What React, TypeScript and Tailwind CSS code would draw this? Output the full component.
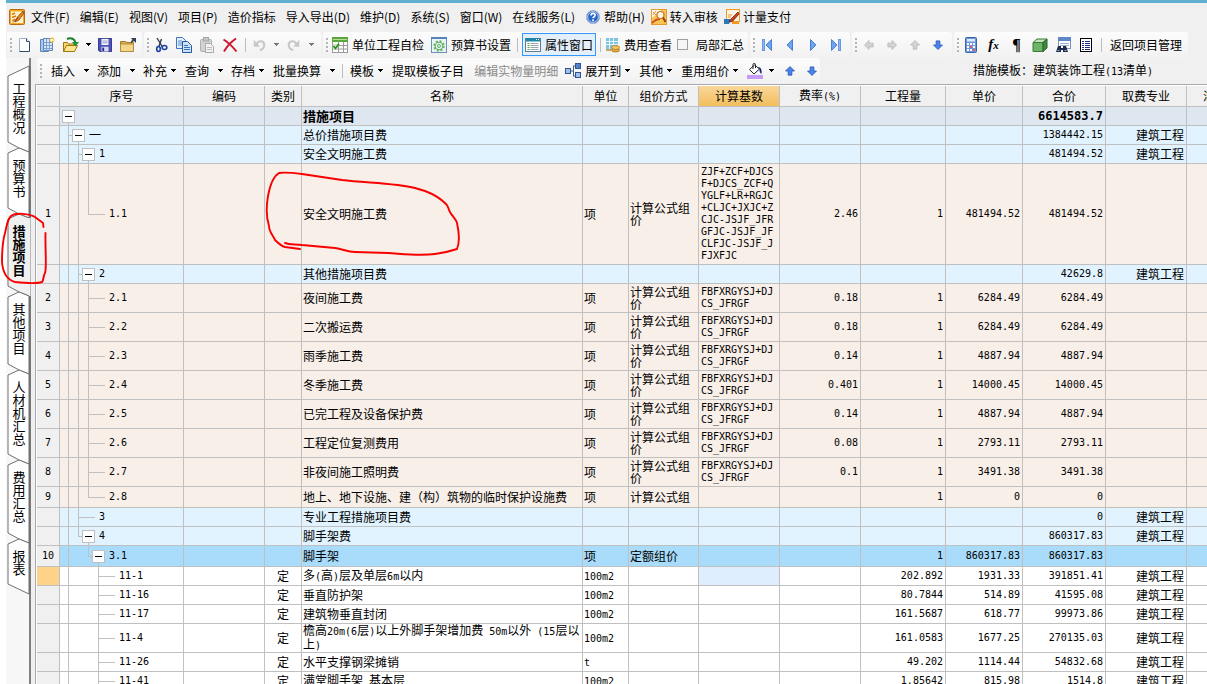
import { Fragment, type ReactNode } from "react"
import clsx from "clsx"

const MONO = "font-['DejaVu_Sans_Mono',monospace]"
const SANS = "font-['Noto_Sans_CJK_SC',sans-serif]"

/* ---------- data ---------- */

const COLUMNS = [
  { key: "no", label: "", col: "w-[23px]" },
  { key: "seq", label: "序号", col: "w-[124px]" },
  { key: "code", label: "编码", col: "w-[81px]" },
  { key: "kind", label: "类别", col: "w-[37px]" },
  { key: "name", label: "名称", col: "" },
  { key: "unit", label: "单位", col: "w-[46px]" },
  { key: "method", label: "组价方式", col: "w-[70px]" },
  { key: "base", label: "计算基数", col: "w-[81px]" },
  { key: "rate", label: "费率(%)", col: "w-[81px]" },
  { key: "qty", label: "工程量", col: "w-[85px]" },
  { key: "price", label: "单价", col: "w-[77px]" },
  { key: "total", label: "合价", col: "w-[83px]" },
  { key: "major", label: "取费专业", col: "w-[81px]" },
  { key: "summary", label: "汇总类别", col: "w-[81px]" },
]

type Tone = "root" | "group" | "item" | "picked" | "plain"

interface Row {
  tone: Tone
  h: number
  seq: string
  name: string
  // tree connectors: levels with a full line, the elbow level, and the toggle level
  full: number[]
  elbow?: number
  last?: boolean
  toggle?: number
  no?: string
  kind?: string
  unit?: string
  method?: string
  base?: string
  rate?: string
  qty?: string
  price?: string
  total?: string
  major?: string
  active?: boolean
}

const JZ = "建筑工程"
const GS = "计算公式组价"
const FB = "FBFXRGYSJ+DJCS_JFRGF"
const LONG_BASE =
  "ZJF+ZCF+DJCSF+DJCS_ZCF+QYGLF+LR+RGJC+CLJC+JXJC+ZCJC-JSJF_JFRGFJC-JSJF_JFCLFJC-JSJF_JFJXFJC"

const item = (no: string, seq: string, name: string, rate: string, price: string): Row => ({
  tone: "item", h: 29, no, seq, name, full: [0, 1], elbow: 2,
  unit: "项", method: GS, base: FB, rate, qty: "1", price, total: price,
})

const quota = (seq: string, name: string, unit: string, qty: string, price: string, total: string, h = 19): Row => ({
  tone: "plain", h, seq, name, full: [0], elbow: 3, kind: "定", unit, qty, price, total, major: JZ,
})

const ROWS: Row[] = [
  { tone: "root", h: 19, seq: "", name: "措施项目", full: [], toggle: 0, total: "6614583.7" },
  { tone: "group", h: 19, seq: "一", name: "总价措施项目费", full: [], elbow: 0, toggle: 1, total: "1384442.15", major: JZ },
  { tone: "group", h: 19, seq: "1", name: "安全文明施工费", full: [0], elbow: 1, toggle: 2, total: "481494.52", major: JZ },
  {
    tone: "item", h: 101, no: "1", seq: "1.1", name: "安全文明施工费", full: [0, 1], elbow: 2, last: true,
    unit: "项", method: GS, base: LONG_BASE, rate: "2.46", qty: "1", price: "481494.52", total: "481494.52",
  },
  { tone: "group", h: 19, seq: "2", name: "其他措施项目费", full: [0], elbow: 1, toggle: 2, total: "42629.8", major: JZ },
  item("2", "2.1", "夜间施工费", "0.18", "6284.49"),
  item("3", "2.2", "二次搬运费", "0.18", "6284.49"),
  item("4", "2.3", "雨季施工费", "0.14", "4887.94"),
  item("5", "2.4", "冬季施工费", "0.401", "14000.45"),
  item("6", "2.5", "已完工程及设备保护费", "0.14", "4887.94"),
  item("7", "2.6", "工程定位复测费用", "0.08", "2793.11"),
  item("8", "2.7", "非夜间施工照明费", "0.1", "3491.38"),
  {
    tone: "item", h: 21, no: "9", seq: "2.8", name: "地上、地下设施、建（构）筑物的临时保护设施费", full: [0, 1], elbow: 2,
    last: true, unit: "项", method: GS, qty: "1", price: "0", total: "0",
  },
  { tone: "group", h: 19, seq: "3", name: "专业工程措施项目费", full: [0], elbow: 1, total: "0", major: JZ },
  { tone: "group", h: 19, seq: "4", name: "脚手架费", full: [0], elbow: 1, last: true, toggle: 2, total: "860317.83", major: JZ },
  {
    tone: "picked", h: 21, no: "10", seq: "3.1", name: "脚手架", full: [0], elbow: 2, last: true, toggle: 3,
    unit: "项", method: "定额组价", qty: "1", price: "860317.83", total: "860317.83",
  },
  { ...quota("11-1", "多(高)层及单层6m以内", "100m2", "202.892", "1931.33", "391851.41"), active: true },
  quota("11-16", "垂直防护架", "100m2", "80.7844", "514.89", "41595.08"),
  quota("11-17", "建筑物垂直封闭", "100m2", "161.5687", "618.77", "99973.86"),
  quota("11-4", "檐高20m(6层)以上外脚手架增加费 50m以外 (15层以上)", "100m2", "161.0583", "1677.25", "270135.03", 29),
  quota("11-26", "水平支撑钢梁摊销", "t", "49.202", "1114.44", "54832.68"),
  quota("11-41", "满堂脚手架 基本层", "100m2", "1.85642", "815.98", "1514.8"),
]

const TONES: Record<Tone, string> = {
  root: "bg-[#dee6f0]",
  group: "bg-[#e1f3ff]",
  item: "bg-[#f8efe9]",
  picked: "bg-[#a9dcfb]",
  plain: "bg-white",
}

const TABS = [
  { label: "工程概况", h: 77 },
  { label: "预算书", h: 66 },
  { label: "措施项目", h: 78 },
  { label: "其他项目", h: 78 },
  { label: "人材机汇总", h: 90 },
  { label: "费用汇总", h: 79 },
  { label: "报表", h: 51 },
]

/* ---------- small pieces ---------- */

// latin runs use the narrow fixed pitch face, half the width of a chinese glyph
function Mixed({ text }: { text: string }) {
  return (
    <>
      {text.split(/([\x20-\x7e]+)/).map((part, i) =>
        i % 2 ? (
          <span key={i} className={clsx(MONO, "text-[10px]")}>{part}</span>
        ) : (
          <Fragment key={i}>{part}</Fragment>
        ),
      )}
    </>
  )
}

function Icon({ children, size = 16 }: { children: ReactNode; size?: number }) {
  return (
    <svg width={size} height={size} viewBox="0 0 16 16" fill="none" className="shrink-0" aria-hidden="true">
      {children}
    </svg>
  )
}

function Caret({ className = "", color = "#000" }: { className?: string; color?: string }) {
  return (
    <svg width="7" height="4" viewBox="0 0 7 4" className={clsx("shrink-0", className)} aria-hidden="true">
      <path d="M1 0h5v1H5v1H4v1H3V2H2V1H1z" fill={color} />
    </svg>
  )
}

function Sep() {
  return <span className="mx-1 h-[14px] w-px shrink-0 bg-[#bdbdbd]" />
}

function Group({ children, className = "" }: { children: ReactNode; className?: string }) {
  return (
    <div
      className={clsx(
        "flex h-[26px] shrink-0 items-center rounded-[3px] bg-linear-to-b from-[#fcfcfc] to-[#f1f1f1]",
        className,
      )}
    >
      <span className="ml-[3px] flex shrink-0 flex-col gap-[2px]">
        {[0, 1, 2, 3].map((n) => (
          <i key={n} className="h-[2px] w-[2px] bg-[#b4b4b4]" />
        ))}
      </span>
      {children}
    </div>
  )
}

function Tool({ label, children, className = "w-[23px]" }: { label: string; children: ReactNode; className?: string }) {
  return (
    <button type="button" aria-label={label} className={clsx("flex h-6 shrink-0 items-center justify-center", className)}>
      {children}
    </button>
  )
}

function Drop({ label, near = false, icon }: { label: string; near?: boolean; icon?: ReactNode }) {
  return (
    <button type="button" className="flex shrink-0 items-center whitespace-nowrap">
      {icon}
      {label}
      <Caret className={near ? "mr-2 ml-[3px]" : "mr-[7px] ml-2"} />
    </button>
  )
}

/* ---------- icons ---------- */

const AppIcon = () => (
  <Icon>
    <rect x="0.5" y="0.5" width="15" height="15" rx="1" fill="#f6a821" stroke="#b86a10" />
    <path d="M2 2.500h12V14H2z" fill="#fff3d0" />
    <path d="M3 5.500 6 4M3 8.500l4-1.500M3 12l3-2" stroke="#d77a12" strokeWidth="1.500" />
    <path d="M14 2 8.500 8l-2.500 5 4-2 5-7z" fill="#f08a1c" stroke="#7d3a08" strokeWidth="0.800" />
    <path d="m4 13.500 5-5" stroke="#7d3a08" />
  </Icon>
)

const HelpIcon = () => (
  <Icon>
    <circle cx="8" cy="8" r="6.600" fill="#2b66c9" stroke="#9fb6da" />
    <circle cx="8" cy="8" r="5.400" stroke="#dfe9f8" strokeWidth="0.800" />
    <path d="M6 6.500c0-3 4.300-2.600 4.100-.3C10 7.700 8.200 7.600 8.100 9.300" stroke="#fff" strokeWidth="1.700" />
    <rect x="7.200" y="10.500" width="1.800" height="1.600" fill="#fff" />
  </Icon>
)

const AuditIcon = () => (
  <Icon>
    <rect x="0.5" y="0.5" width="15" height="15" fill="#fbc452" stroke="#e39b2c" />
    <path d="M1 1h9L1 9z" fill="#fffaf0" />
    <path d="m2 3 3 3M5 2l-3 4" stroke="#e8902c" />
    <path d="M1 14c3-3 5-4 8-4" stroke="#d0521c" strokeWidth="1.800" />
    <circle cx="9.500" cy="6" r="3.500" fill="#fdf3dd" stroke="#c07c30" strokeWidth="1.200" />
    <path d="m12 8.500 2.500 4.500" stroke="#8d4313" strokeWidth="2" />
  </Icon>
)

const PayIcon = () => (
  <Icon>
    <rect x="2.500" y="0.500" width="13" height="12" fill="#fff7e6" stroke="#f09a24" />
    <path d="M0 10h7l-2 5H0z" fill="#2d79b8" />
    <path d="M4 6h4M4 8h3" stroke="#e7912c" />
    <path d="m14 3-7 7-2 3 4-1 6-7z" fill="#ce3d1c" stroke="#5b2010" strokeWidth="0.700" />
    <path d="M8 14h7" stroke="#f09a24" strokeWidth="2" />
  </Icon>
)

const NewIcon = () => (
  <Icon>
    <path d="M3.500 1.500h7l3 3v10h-10z" fill="#fff" stroke="#9fb2cc" />
    <path d="M10.500 1.500v3h3" fill="#dce7f5" stroke="#36506f" />
    <path d="M13.500 5v9.500h-10" stroke="#304a68" />
  </Icon>
)

const NewGridIcon = () => (
  <Icon>
    <path d="M1.500 2.500h8v12h-8z" fill="#a9c8ee" stroke="#5d83b8" />
    <path d="M4.500 1.500h9v12h-9z" fill="#d7e7fa" stroke="#5d83b8" />
    <path d="M7.500 2v12M10.500 2v12M5 5.500h8M5 8.500h8M5 11.500h8" stroke="#7fa0cd" />
    <path d="M13 0v6M10 3h6M11 1l4 4M15 1l-4 4" stroke="#f3bd35" />
    <circle cx="13" cy="3" r="1.400" fill="#fff6b0" />
  </Icon>
)

const OpenIcon = () => (
  <Icon>
    <path d="M.5 14.500v-9h4l1 1.500h6v3" fill="#f8d568" stroke="#a07518" />
    <path d="m.5 14.500 3-6h11l-3 6z" fill="#ffe88c" stroke="#a07518" />
    <path d="M4 2c4-2 8 0 8.500 4" stroke="#1d7d2c" strokeWidth="2" />
    <path d="M9 5h7l-3.500 4.500z" fill="#1f9234" />
  </Icon>
)

const SaveIcon = () => (
  <Icon size={14}>
    <path d="M.5.500h15v15H2l-1.500-1.500z" fill="#4c52b8" stroke="#232a80" />
    <rect x="4" y="1" width="8" height="7" fill="#f2f3fb" />
    <path d="M5 3.500h6M5 5.500h6" stroke="#8f94cc" />
    <rect x="4" y="10" width="8" height="5.500" fill="#d9dbef" />
    <rect x="5" y="11" width="2" height="4" fill="#232a80" />
  </Icon>
)

const FolderIcon = () => (
  <Icon>
    <path d="M.5 4.500h5l1.500 1h6.500v9H.5z" fill="#d8ac56" stroke="#a57b2a" />
    <path d="M.5 7h13v7.500H.5z" fill="#f4d58b" stroke="#b68d3a" />
    <path d="M11 1h5v5l-2-2-3 2V4l1.500-1z" fill="#333f55" />
  </Icon>
)

const CutIcon = () => (
  <Icon>
    <path d="M4 1l5.500 9M8.500 2 6 9" stroke="#303a50" strokeWidth="1.400" />
    <ellipse cx="5.500" cy="12" rx="1.800" ry="2.500" stroke="#17409f" strokeWidth="1.600" />
    <ellipse cx="11.500" cy="10.500" rx="2.300" ry="2" stroke="#17409f" strokeWidth="1.600" />
  </Icon>
)

const CopyIcon = () => (
  <Icon>
    <path d="M.5.500h6l3 3v8h-9z" fill="#e3effc" stroke="#3f74b8" />
    <path d="M2 4h4M2 6h4M2 8h4" stroke="#5b8ecb" />
    <path d="M6.500 4.500h5l4 4v7h-9z" fill="#cfe2f9" stroke="#2158a3" />
    <path d="M8 8.500h4M8 10.500h6M8 12.500h6" stroke="#3a73bc" />
  </Icon>
)

const PasteIcon = () => (
  <Icon>
    <rect x="1.500" y="2.500" width="11" height="12" rx="1" fill="#d2d2d2" stroke="#b0b0b0" />
    <rect x="4.500" y=".5" width="5" height="3.500" fill="#c6c6c6" stroke="#a5a5a5" />
    <path d="M6.500 6.500h5l3 3v6h-8z" fill="#f3f3f3" stroke="#a9a9a9" />
    <path d="M8 10.500h5M8 12.500h5" stroke="#bcbcbc" />
  </Icon>
)

const DeleteIcon = () => (
  <Icon>
    <path d="M1.500 2.500c5 3 9 7 13 12M14 1.500C9 5 5 9 2 14.500" stroke="#cf1630" strokeWidth="2" />
  </Icon>
)

const UndoIcon = ({ flip = false }: { flip?: boolean }) => (
  <Icon size={14}>
    <g transform={flip ? "translate(16 0) scale(-1 1)" : undefined}>
      <path d="M5 7c3-5 9-4 9 1 0 3-2 5-5 6" stroke="#c8c8c8" strokeWidth="2.500" />
      <path d="M2 2v8h7z" fill="#c8c8c8" />
    </g>
  </Icon>
)

const CheckTableIcon = () => (
  <Icon>
    <rect x=".5" y=".5" width="15" height="15" fill="#fff" stroke="#9a9a9a" />
    <rect width="16" height="5" fill="#5aa83c" />
    <path d="M1 2.500h14" stroke="#b4e09b" />
    <path d="M1 8.500h15M1 12h15M6.500 5v11M11.500 5v11" stroke="#9a9a9a" />
    <rect x="1" y="7" width="5" height="5" fill="#c9eab9" />
    <path d="m1.500 9 2 2.500L7 6.500" stroke="#2f8a1b" strokeWidth="1.600" />
  </Icon>
)

const GearIcon = () => (
  <Icon>
    <rect x=".5" y=".5" width="15" height="15" fill="#eaf3f8" stroke="#6b8fb5" />
    <path d="M0 1h16" stroke="#5784b8" strokeWidth="2" />
    <circle cx="8" cy="9" r="4.800" stroke="#5fb257" strokeWidth="1.800" strokeDasharray="2 1.770" />
    <circle cx="8" cy="9" r="3.800" stroke="#5fb257" />
    <circle cx="8" cy="9" r="1.500" stroke="#5fb257" />
  </Icon>
)

const PanelIcon = () => (
  <Icon>
    <rect x=".5" y="1.500" width="15" height="13" fill="#fff" stroke="#5f7d92" />
    <rect x="1" y="1" width="14" height="3.500" fill="#1f85a6" />
    <path d="M11 2.500h1M13 2.500h1" stroke="#fff" />
    <path d="M2.500 6.500h2M2.500 8.500h2M2.500 10.500h2M2.500 12.500h2" stroke="#50a145" />
    <path d="M5.500 6.500h8M5.500 8.500h8M5.500 10.500h8M5.500 12.500h8" stroke="#9aa4ab" />
  </Icon>
)

const CostIcon = () => (
  <Icon>
    <rect x="1" y="1" width="12" height="11" fill="#7cc4de" />
    <path d="M1 4.500h12M1 7.500h12M4.500 1v11M8.500 1v11" stroke="#e9f7fc" />
    <ellipse cx="10.500" cy="13" rx="4" ry="2" fill="#e6ac3d" stroke="#a8741d" strokeWidth=".8" />
    <ellipse cx="10.500" cy="10.500" rx="4" ry="2" fill="#f3c65c" stroke="#a8741d" strokeWidth=".8" />
    <path d="M1 13h6" stroke="#c7a465" strokeWidth="2" />
  </Icon>
)

const NavIcon = ({ bar = false, flip = false }: { bar?: boolean; flip?: boolean }) => (
  <Icon>
    <g transform={flip ? "translate(16 0) scale(-1 1)" : undefined}>
      {bar && <rect x="3.500" y="2.500" width="2" height="11" fill="#8db8f4" stroke="#6b97de" />}
      <path d={bar ? "M12.500 2.500v11L7 8z" : "M10.500 2.500v11L5 8z"} fill="#6ea3f0" stroke="#4a7fd6" />
    </g>
  </Icon>
)

const ArrowIcon = ({ turn, blue = false }: { turn: number; blue?: boolean }) => (
  <Icon size={12}>
    <path
      d="M8 2l6 6h-3.500v5.500h-5V8H2z"
      transform={`rotate(${turn} 8 8)`}
      fill={blue ? "#4a84ea" : "#d3d3d3"}
      stroke={blue ? "#2450ad" : "#b3b3b3"}
    />
  </Icon>
)

const CalcIcon = () => (
  <Icon>
    <rect x="2.500" y=".5" width="11" height="15" rx="1" fill="#6f97d8" stroke="#3d64a6" />
    <rect x="4" y="2" width="8" height="2.500" fill="#dbeafd" />
    <path d="M4 7h8M4 10h8M4 13h8" stroke="#fff" strokeWidth="2" strokeDasharray="2 1" />
    <path d="M7 10h2M10 13h2" stroke="#e0605e" strokeWidth="2" />
  </Icon>
)

const CubeIcon = () => (
  <Icon>
    <path d="M1 5.500 5 2h10l-4 3.500z" fill="#bde3b6" stroke="#3c7a3b" />
    <path d="M1 5.500h10v9H1z" fill="#6db566" stroke="#3c7a3b" />
    <path d="M11 5.500 15 2v9l-4 3.500z" fill="#3d8a3c" stroke="#2a622b" />
  </Icon>
)

const FindIcon = () => (
  <Icon>
    <rect x="3.500" y=".5" width="12" height="11" fill="#fff" stroke="#7b93bd" />
    <rect x="3" y="0" width="13" height="4" fill="#5d86cd" />
    <path d="M5 6.500h9M5 8.500h9" stroke="#9db2d5" />
    <path d="M3 9h3v2h2V9h3l2 6H8v-2H6v2H1z" fill="#1f2c48" />
    <path d="M2.500 13.500h2M9.500 13.500h2" stroke="#86a9e0" />
  </Icon>
)

const ListIcon = () => (
  <Icon>
    <rect x="2.500" y="1.500" width="11" height="13" fill="#fff" stroke="#000" />
    <path
      d="M4 4.500h2M4 6.500h2M4 8.500h2M4 10.500h2M4 12.500h2M7 4.500h5M7 6.500h5M7 8.500h5M7 10.500h5M7 12.500h5"
      stroke="#1d2b86"
    />
  </Icon>
)

const TreeIcon = () => (
  <Icon>
    <path d="M5 8h4M8.500 3v10M8 3h3M8 13h3" stroke="#45618d" />
    <rect x=".5" y="5.500" width="5" height="5" fill="#9fc0ee" stroke="#31548f" />
    <rect x="10.500" y=".5" width="5" height="5" fill="#4f82cf" stroke="#31548f" />
    <rect x="10.500" y="9.500" width="5" height="5" fill="#9fc0ee" stroke="#31548f" />
  </Icon>
)

const BucketIcon = () => (
  <Icon>
    <path d="m2.500 6.500 5-4.500 5 4-5.500 5z" fill="#fff" stroke="#222" />
    <path d="M6 6V1.500C6 0 8.500 0 8.500 1.500V5" stroke="#222" />
    <path d="M11 4c3 0 4 3 3.500 7-1.500-1-2-2-2-5z" fill="#151d7b" />
    <rect y="12" width="16" height="4" fill="#c79bf5" />
  </Icon>
)

/* ---------- bars ---------- */

function MenuBar() {
  return (
    <nav className="flex h-[28px] items-center gap-[10px] overflow-hidden pl-[3px] whitespace-nowrap">
      <div className="flex items-center gap-[6px]">
        <AppIcon />
        <button type="button">文件(F)</button>
      </div>
      {["编辑(E)", "视图(V)", "项目(P)", "造价指标", "导入导出(D)", "维护(D)", "系统(S)", "窗口(W)", "在线服务(L)"].map((m) => (
        <button type="button" key={m}>{m}</button>
      ))}
      <div className="flex items-center gap-[6px]">
        <button type="button" className="flex items-center gap-[3px]"><HelpIcon />帮助(H)</button>
        <button type="button" className="flex items-center gap-[3px]"><AuditIcon />转入审核</button>
        <button type="button" className="flex items-center gap-[3px]"><PayIcon />计量支付</button>
      </div>
    </nav>
  )
}

function MainToolbar() {
  return (
    <div className="flex h-[27px] items-center gap-[2px] overflow-hidden pl-px whitespace-nowrap">
      <Group className="w-[135px]">
        <Tool label="新建"><NewIcon /></Tool>
        <Tool label="新建工程"><NewGridIcon /></Tool>
        <Tool label="打开" className="w-[25px]"><OpenIcon /></Tool>
        <Tool label="最近打开" className="w-[10px]"><Caret /></Tool>
        <Tool label="保存"><SaveIcon /></Tool>
        <Tool label="目录"><FolderIcon /></Tool>
      </Group>
      <Group className="w-[177px]">
        <Tool label="剪切"><CutIcon /></Tool>
        <Tool label="复制"><CopyIcon /></Tool>
        <Tool label="粘贴"><PasteIcon /></Tool>
        <Tool label="删除"><DeleteIcon /></Tool>
        <Sep />
        <Tool label="撤销" className="w-[18px]"><UndoIcon /></Tool>
        <Tool label="撤销列表" className="w-[17px]"><Caret color="#777" /></Tool>
        <Tool label="恢复" className="w-[18px]"><UndoIcon flip /></Tool>
        <Tool label="恢复列表" className="w-[17px]"><Caret color="#777" /></Tool>
      </Group>
      <Group className="w-[425px]">
        <button type="button" className="ml-1 flex items-center gap-1"><CheckTableIcon />单位工程自检</button>
        <button type="button" className="mr-[2px] ml-[7px] flex items-center gap-1"><GearIcon />预算书设置</button>
        <Sep />
        <button type="button" className="flex h-[23px] items-center gap-1 border border-[#3399ff] bg-[#e3effb] px-[2px]">
          <PanelIcon />属性窗口
        </button>
        <Sep />
        <button type="button" className="flex items-center gap-[3px]"><CostIcon />费用查看</button>
        <label className="ml-[5px] flex items-center gap-2">
          <input type="checkbox" className="h-[11px] w-[11px] appearance-none border border-[#a0a0a0] bg-[#f6f6f6]" />
          局部汇总
        </label>
      </Group>
      <Group className="w-[100px]">
        <Tool label="首条"><NavIcon bar /></Tool>
        <Tool label="上一条"><NavIcon /></Tool>
        <Tool label="下一条"><NavIcon flip /></Tool>
        <Tool label="末条"><NavIcon bar flip /></Tool>
      </Group>
      <Group className="w-[100px]">
        <Tool label="升级"><ArrowIcon turn={-90} /></Tool>
        <Tool label="降级"><ArrowIcon turn={90} /></Tool>
        <Tool label="上移"><ArrowIcon turn={0} /></Tool>
        <Tool label="下移"><ArrowIcon turn={180} blue /></Tool>
      </Group>
      <Group className="w-[234px]">
        <Tool label="计算器"><CalcIcon /></Tool>
        <Tool label="公式">
          <span className="font-['Liberation_Serif',serif] text-[15px] leading-4 font-bold italic">
            f<span className="text-[11px]">x</span>
          </span>
        </Tool>
        <Tool label="特殊符号">
          <span className="font-['Liberation_Serif',serif] text-[16px] leading-4 font-bold">¶</span>
        </Tool>
        <Tool label="图元"><CubeIcon /></Tool>
        <Tool label="查找"><FindIcon /></Tool>
        <Tool label="列表"><ListIcon /></Tool>
        <Sep />
        <button type="button" className="ml-1">返回项目管理</button>
      </Group>
    </div>
  )
}

function EditToolbar() {
  return (
    <div className="flex h-[26px] items-center overflow-hidden pl-[2px] whitespace-nowrap">
      <Group className="w-[783px]">
        <span className="w-[9px] shrink-0" />
        <Drop label="插入" />
        <Drop label="添加" />
        <Drop label="补充" near />
        <Drop label="查询" />
        <Drop label="存档" near />
        <Drop label="批量换算" />
        <span className="mr-[7px] -ml-px h-[14px] w-px shrink-0 bg-[#bdbdbd]" />
        <Drop label="模板" near />
        <button type="button" className="mr-[10px]">提取模板子目</button>
        <button type="button" disabled className="mr-[7px] text-[#8a8a8a]">编辑实物量明细</button>
        <Drop label="展开到" near icon={<span className="mr-1"><TreeIcon /></span>} />
        <Drop label="其他" near />
        <Drop label="重用组价" near />
        <Tool label="填充颜色" className="w-4"><BucketIcon /></Tool>
        <Tool label="选择颜色" className="w-4"><Caret /></Tool>
        <Tool label="上移" className="w-[22px]"><ArrowIcon turn={0} blue /></Tool>
        <Tool label="下移" className="w-[22px]"><ArrowIcon turn={180} blue /></Tool>
      </Group>
      <span className="mr-[54px] ml-auto"><Mixed text="措施模板：建筑装饰工程(13清单)" /></span>
    </div>
  )
}

/* ---------- side tabs ---------- */

function SideTab({ label, h, first, current, end }: { label: string; h: number; first: boolean; current: boolean; end: boolean }) {
  const top = first ? "0,0 21,-10" : "0,0 11,-5 21,-1"
  const bottom = end ? `21,${h - 1} 0,${h - 11}` : `21,${h - 1} 11,${h - 5} 0,${h - 11}`
  return (
    <button type="button" className="grid w-[22px]" style={{ height: h }} aria-current={current ? "page" : undefined}>
      <svg width="22" height={h} className="overflow-visible [grid-area:1/1]" aria-hidden="true">
        <polygon points={`${top} ${bottom}`} fill={current ? "#f0f0f0" : "#fff"} />
        <polyline points={top} fill="none" stroke="#707070" />
        <polyline points={`${bottom} 0,0`} fill="none" stroke="#707070" />
        <path d={`M21.500 ${first ? -10 : -1}V${h - 1}`} stroke={current ? "#f0f0f0" : "#707070"} strokeWidth="2" />
      </svg>
      <span
        className={clsx(
          "mx-auto w-[13px] pt-[5px] text-[13px] leading-[13px] [grid-area:1/1]",
          current && "font-bold",
        )}
      >
        {label}
      </span>
    </button>
  )
}

function SideTabs() {
  return (
    <aside className="flex w-[25px] shrink-0 flex-col border-r-2 border-[#808080] bg-[#f7f7f7] pt-[18px] pl-[2px]">
      {TABS.map((t, i) => (
        <SideTab key={t.label} {...t} first={i === 0} current={i === 2} end={i === TABS.length - 1} />
      ))}
    </aside>
  )
}

/* ---------- grid ---------- */

function TreeCell({ row }: { row: Row }) {
  const x = (level: number) => 8 + level * 10
  const h = row.h
  const mid = Math.floor((h - 1) / 2)
  const end = row.toggle !== undefined ? x(row.toggle) + 11 : x(row.elbow ?? 0) + 21
  return (
    <div className="flex items-center overflow-hidden" style={{ height: h - 1 }}>
      <svg width={end} height={h} className="shrink-0 self-start" shapeRendering="crispEdges" aria-hidden="true">
        {row.full.map((l) => (
          <rect key={l} x={x(l)} width="1" height={h} fill="#c0c0c0" />
        ))}
        {row.elbow !== undefined && (
          <>
            <rect x={x(row.elbow)} width="1" height={row.last ? mid + 1 : h} fill="#c0c0c0" />
            <rect x={x(row.elbow)} y={mid} width={row.toggle !== undefined ? 5 : 17} height="1" fill="#c0c0c0" />
          </>
        )}
        {row.toggle !== undefined && (
          <>
            <rect x={x(row.toggle)} y={mid} width="1" height={h - mid} fill="#c0c0c0" />
            <rect x={x(row.toggle) - 6} y={mid - 6} width="13" height="13" fill="#c0c0c0" />
            <rect x={x(row.toggle) - 5} y={mid - 5} width="11" height="11" fill="#fff" />
            <rect x={x(row.toggle) - 3} y={mid} width="7" height="1" fill="#000" />
          </>
        )}
      </svg>
      <Mixed text={row.seq} />
    </div>
  )
}

function GridRow({ row }: { row: Row }) {
  const edge = "border-r border-b border-[#c0c0c0] py-0"
  const text = clsx(edge, "pr-0 pl-px")
  const num = clsx(edge, "px-[2px] text-right", MONO, row.tone === "root" ? "text-xs font-bold" : "text-[10px]")
  return (
    <tr className={clsx(TONES[row.tone], "leading-[12px]")} style={{ height: row.h }}>
      <th className={clsx(edge, MONO, "text-center text-[10px] font-normal", row.active ? "bg-[#ffd28a]" : "bg-[#f0f0f0]")}>
        {row.no}
      </th>
      <td className={clsx(edge, "px-0")}><TreeCell row={row} /></td>
      <td className={edge} />
      <td className={clsx(edge, "px-0 text-center")}>{row.kind}</td>
      <td className={clsx(text, row.tone === "root" && "text-[13px] font-bold")}><Mixed text={row.name} /></td>
      <td className={text}><Mixed text={row.unit ?? ""} /></td>
      <td className={text}>
        <div className="overflow-hidden" style={{ maxHeight: row.h < 24 ? 13 : 26 }}>{row.method}</div>
      </td>
      <td className={clsx(edge, MONO, "px-[2px] text-[10px] break-all", row.active && "bg-[#dfeeff]")}>{row.base}</td>
      <td className={num}>{row.rate}</td>
      <td className={num}>{row.qty}</td>
      <td className={num}>{row.price}</td>
      <td className={num}>{row.total}</td>
      <td className={clsx(edge, "px-[2px] text-right")}>{row.major}</td>
      <td className={edge} />
    </tr>
  )
}

function CostGrid() {
  return (
    <div className="min-w-0 flex-1 overflow-hidden border-t border-l border-[#a9a9b0] bg-white pt-px pl-px">
      {/* the last column runs past the right edge of the pane */}
      <table className="w-[calc(100%+61px)] table-fixed border-separate border-spacing-0">
        <colgroup>
          {COLUMNS.map((c) => (
            <col key={c.key} className={c.col} />
          ))}
        </colgroup>
        <thead>
          <tr className="h-[21px]">
            {COLUMNS.map((c) => (
              <th
                key={c.key}
                className={clsx(
                  "border-r border-b border-[#c0c0c0] p-0 text-center leading-[12px] font-normal",
                  c.key === "base" ? "bg-linear-to-b from-[#fad79a] to-[#f2be5c]" : "bg-[#f0f0f0]",
                )}
              >
                <Mixed text={c.label} />
              </th>
            ))}
          </tr>
        </thead>
        <tbody>
          {ROWS.map((r) => (
            <GridRow key={r.seq + r.name} row={r} />
          ))}
        </tbody>
      </table>
    </div>
  )
}

// hand drawn red marks lying over the window
function Ink() {
  return (
    <svg className="pointer-events-none absolute top-0 left-0" width="470" height="300" fill="none" aria-hidden="true">
      <g stroke="#f80000" strokeWidth="1.900" strokeLinecap="round" strokeLinejoin="round">
        <path d="M43.500 227 43 223 35 217C30 214 16 212 11 216 7 220 7 225 5 233 2 243 2 252 2 262 3 275 8 280 15 282 24 283 36 284 42 282 44 280 43 276 45 273 47 268 45 250 45.500 233" />
        <path d="M285 243c5 2 10 1 17 2l33 3c8 1 12 4 20 4l33 1c16 1 32 3 47 1 8-1 16-3 22-5 3-7 2-17 0-26-1-4-5-7-7-11-2-3-1-5-4-8-6-6-13-10-21-13l-10-3c-20-5-49-5-73-8l-40-6c-8-1-18-2-23-1-5 3-9 12-11 23-2 12-1 24 1 30 0 6 4 9 6 14 3 3 6 6 10 7l15 2" />
      </g>
    </svg>
  )
}

export default function App() {
  return (
    <div className={clsx("relative h-screen overflow-hidden bg-white pl-[6px] text-xs leading-4 text-black", SANS)}>
      <div className="flex h-full flex-col border-t-[3px] border-[#5fafd3] bg-[#f0f0f0]">
        <MenuBar />
        <MainToolbar />
        <div className="flex min-h-0 flex-1">
          <SideTabs />
          <div className="flex min-w-0 flex-1 flex-col pl-1">
            <EditToolbar />
            <CostGrid />
          </div>
        </div>
      </div>
      <Ink />
    </div>
  )
}
